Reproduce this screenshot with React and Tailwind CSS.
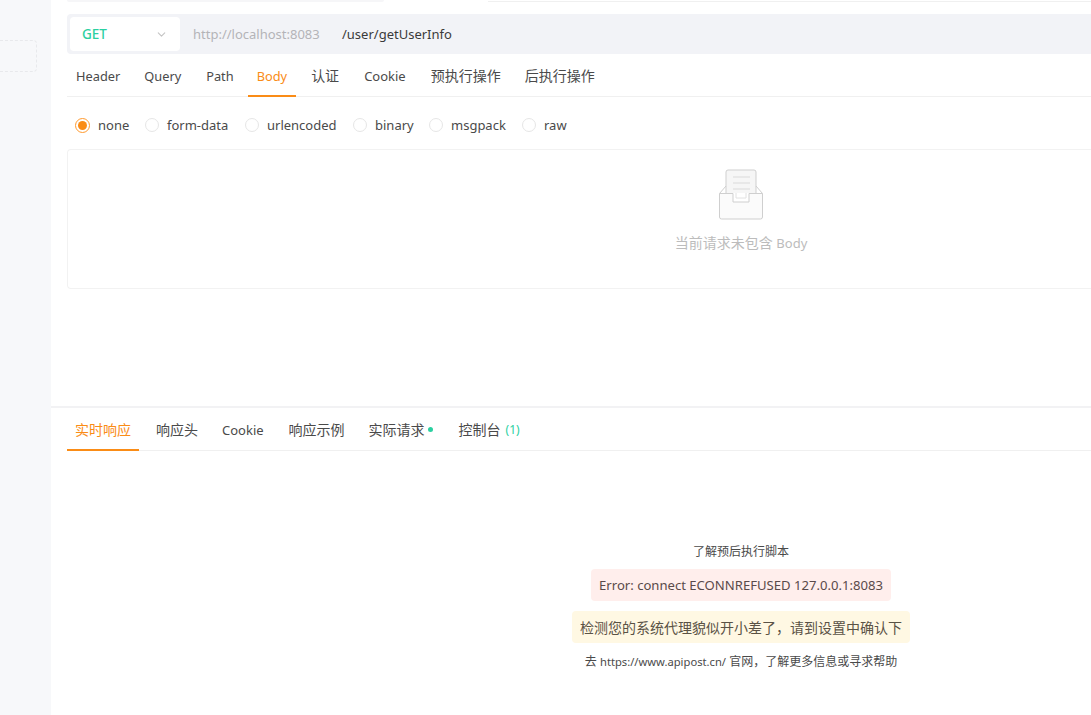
import { ChevronDown } from "lucide-react";

const font = "font-['Noto_Sans','Noto_Sans_CJK_SC',sans-serif]";

const requestTabs = [
  { label: "Header", cls: "pt-[4px] text-[12.800px]" },
  { label: "Query", cls: "mr-px pt-[4px] text-[12.800px]" },
  { label: "Path", cls: "-mr-px pt-[4px] text-[12.800px]" },
  { label: "Body", cls: "pt-[4px] text-[12.800px]", active: true },
  { label: "认证", cls: "mr-px pt-[2px] text-[14px]" },
  { label: "Cookie", cls: "mr-px pt-[4px] text-[13px]" },
  { label: "预执行操作", cls: "pt-[2px] text-[14px]" },
  { label: "后执行操作", cls: "pt-[2px] text-[14px]" },
];

const bodyTypes = [
  { label: "none", cls: "w-[70px]", checked: true },
  { label: "form-data", cls: "w-[100px]" },
  { label: "urlencoded", cls: "w-[108px]" },
  { label: "binary", cls: "w-[76px]" },
  { label: "msgpack", cls: "w-[93px]" },
  { label: "raw", cls: "w-[60px]" },
];

function Tab({ active, cls, px, children }) {
  return (
    <div
      className={`-mb-px flex h-[43px] items-center border-b-2 ${px} ${cls} ${
        active ? "border-[#fa8c16] text-[#fa8c16]" : "border-transparent text-[#4a4a4a]"
      }`}
    >
      {children}
    </div>
  );
}

function Radio({ label, checked, cls }) {
  return (
    <div className={`flex items-center gap-2 ${cls}`}>
      <span
        className={`flex items-center justify-center rounded-full border ${
          checked ? "h-[15px] w-[15px] border-[#ff9a2e]" : "h-[14px] w-[14px] border-[#e6e6e6]"
        }`}
      >
        {checked && <span className="h-[9px] w-[9px] rounded-full bg-[#fa8c16]" />}
      </span>
      <span className="pt-px text-[13px] text-[#4a4a4a]">{label}</span>
    </div>
  );
}

function InboxIcon() {
  return (
    <svg width="46" height="51" viewBox="0 0 46 51" fill="none" stroke="#cfcfcf" strokeWidth="1">
      <path d="M8 24V3a2 2 0 0 1 2-2h26a2 2 0 0 1 2 2v21" fill="#f6f6f6" />
      <path d="M15 8h17M15 14h17M15 20h17" stroke="#dadada" />
      <path d="M18 24v5h10v-5" stroke="#e2e2e2" />
      <path d="M1.500 24.500L8 17M44.500 24.500L38 17" />
      <path
        d="M1.500 24.500H15V33H31V24.500H44.500V48a2 2 0 0 1-2 2H3.500a2 2 0 0 1-2-2z"
        fill="#fbfbfb"
      />
    </svg>
  );
}

export default function App() {
  return (
    <div className={`flex h-[715px] w-[1091px] overflow-hidden bg-white ${font}`}>
      <aside className="flex w-[51px] shrink-0 flex-col bg-[#f7f8fa] pt-[40px]">
        <div className="h-[32px] w-[37px] rounded-r-[4px] border border-l-0 border-dashed border-[#e8e9ec]" />
      </aside>

      <main className="flex w-[1364px] shrink-0 flex-col">
        <div className="flex h-[14px] items-start pl-[16px]">
          <div className="h-[2px] w-[317px] rounded-b bg-[#f6f6f8]" />
          <div className="ml-[104px] mt-px h-px flex-1 bg-[#f0f0f0]" />
        </div>

        <div className="ml-[16px] flex h-[40px] items-center rounded-l bg-[#f2f3f7] pl-[3px]">
          <div className="flex h-[34px] w-[110px] items-center justify-between rounded bg-white px-[12px]">
            <span className="text-[13.500px] font-medium text-[#2bd0a1]">GET</span>
            <ChevronDown size={13} className="text-[#c4c4c4]" />
          </div>
          <span className="ml-[13px] w-[149px] pt-px text-[13px] text-[#b4b4b8]">http://localhost:8083</span>
          <span className="pt-px text-[13px] text-[#3a3a3a]">/user/getUserInfo</span>
        </div>

        <div className="ml-[16px] flex h-[43px] gap-[6px] border-b border-[#f0f0f0]">
          {requestTabs.map((tab) => (
            <Tab key={tab.label} active={tab.active} cls={tab.cls} px="px-[9px]">
              {tab.label}
            </Tab>
          ))}
        </div>

        <div className="ml-[24px] flex h-[52px] items-center pt-[4px]">
          {bodyTypes.map((item) => (
            <Radio key={item.label} {...item} />
          ))}
        </div>

        <div className="ml-[16px] flex h-[140px] flex-col items-center rounded-l border border-r-0 border-[#f2f2f2] pr-[1px] pt-[19px]">
          <InboxIcon />
          <p className="mt-[12px] text-[14px] text-[#bcbcbc]">
            当前请求未包含 <span className="text-[13px]">Body</span>
          </p>
        </div>

        <div className="mt-[117px] h-[2px] bg-[#f2f2f4]" />

        <div className="ml-[16px] flex h-[43px] gap-[8px] border-b border-[#f0f0f0]">
          <Tab active cls="mr-px pt-[2px] text-[14px]" px="px-[8px]">实时响应</Tab>
          <Tab cls="pt-[2px] text-[14px]" px="px-[8px]">响应头</Tab>
          <Tab cls="mr-px pt-[4px] text-[13px]" px="px-[8px]">Cookie</Tab>
          <Tab cls="pt-[2px] text-[14px]" px="px-[8px]">响应示例</Tab>
          <Tab cls="mr-[2px] pt-[2px] text-[14px]" px="px-[8px]">
            实际请求
            <span className="ml-[3px] h-[5px] w-[5px] rounded-full bg-[#2bd0a1]" />
          </Tab>
          <Tab cls="pt-[2px] text-[14px]" px="px-[8px]">
            控制台
            <span className="ml-[5px] text-[12px] text-[#2bd0a1]">(1)</span>
          </Tab>
        </div>

        <div className="ml-[16px] flex flex-col items-center pt-[92px]">
          <p className="text-[12px] leading-[18px] text-[#4a4a4a]">了解预后执行脚本</p>
          <div className="mt-[8px] flex h-[32px] items-center rounded bg-[#ffeeec] px-[8px] pt-px text-[13.100px] text-[#5a4a4a]">
            Error: connect ECONNREFUSED 127.0.0.1:8083
          </div>
          <div className="mt-[10px] flex h-[32px] items-center rounded bg-[#fff8e3] px-[8px] text-[14px] text-[#5a5245]">
            检测您的系统代理貌似开小差了，请到设置中确认下
          </div>
          <p className="mt-[10px] text-[12px] leading-[18px] text-[#4a4a4a]">
            去 <span className="text-[11.200px]">https://www.apipost.cn/</span> 官网，了解更多信息或寻求帮助
          </p>
        </div>
      </main>
    </div>
  );
}
